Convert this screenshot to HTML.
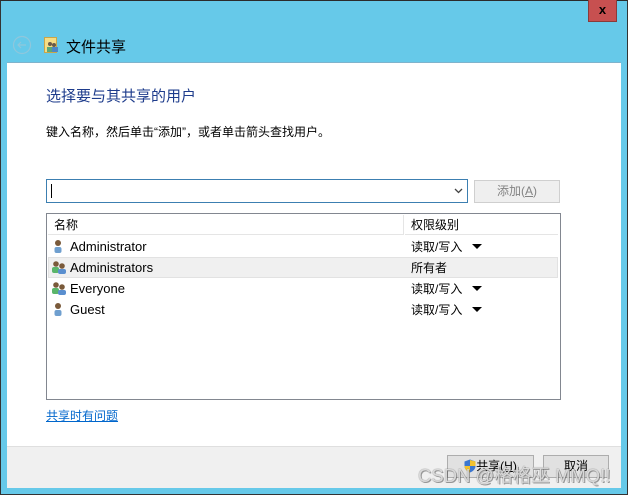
<!DOCTYPE html>
<html><head><meta charset="utf-8"><style>
*{margin:0;padding:0;box-sizing:border-box}
body{width:628px;height:495px;overflow:hidden;background:#66c9e9;font-family:"Liberation Sans","Microsoft YaHei","Noto Sans CJK SC",sans-serif;font-size:12px;color:#000;position:relative}
.frame{position:absolute;left:0;top:0;width:628px;height:495px;border:1px solid #333;border-top:1px solid #2b2b2b}
.abs{position:absolute}
.close{left:588px;top:0;width:29px;height:22px;background:#c75050;border:1px solid #8a3a3a;border-top:none;color:#000;font-weight:bold;font-size:13px;text-align:center;line-height:20px}
.content{left:7px;top:62px;width:614px;height:384px;background:#fff;border-top:1px solid #7fb3cc}
.footer{left:7px;top:446px;width:614px;height:42px;background:#f0f0f0;border-top:1px solid #dfdfdf}
.btn{height:23px;border:1px solid #adadad;background:#e1e1e1;text-align:center;line-height:21px;font-size:12px}
.row{position:absolute;left:1px;width:510px;height:21px;line-height:21px;font-size:12.5px}
.tri{display:inline-block;width:0;height:0;border-left:5px solid transparent;border-right:5px solid transparent;border-top:5px solid #000;margin-left:10px;vertical-align:2px}
.nm{font-size:13px}
</style></head><body>
<div class="frame"></div>
<div class="abs close">x</div>
<svg class="abs" style="left:12px;top:35px" width="20" height="20"><circle cx="10" cy="10" r="8.5" fill="none" stroke="#8fc7dc" stroke-width="1.2"/><path d="M14 10H6M9 7L6 10L9 13" fill="none" stroke="#8fc7dc" stroke-width="1.2"/></svg>
<svg class="abs" style="left:44px;top:37px" width="15" height="16"><rect x="0.5" y="0.5" width="12" height="15" fill="#f5dd85" stroke="#c9a64a"/><circle cx="6" cy="7" r="2" fill="#6a5a4a"/><circle cx="10" cy="8" r="2" fill="#6a5a4a"/><rect x="3" y="10" width="5" height="5" fill="#5aa87a"/><rect x="8" y="10" width="6" height="5" fill="#4c88c8"/></svg>
<div class="abs" style="left:66px;top:36px;font-size:15px;color:#000">文件共享</div>
<div class="abs content"></div>
<div class="abs" style="left:46px;top:85px;font-size:15px;color:#1e3c8c">选择要与其共享的用户</div>
<div class="abs" style="left:46px;top:123px;font-size:12px">键入名称，然后单击“添加”，或者单击箭头查找用户。</div>
<div class="abs" style="left:46px;top:179px;width:422px;height:24px;border:1px solid #3c7fb1"><div style="position:absolute;left:4px;top:4px;width:1px;height:14px;background:#000"></div><svg style="position:absolute;right:4px;top:8px" width="9" height="6"><path d="M1 1L4.5 4.5L8 1" fill="none" stroke="#444" stroke-width="1.3"/></svg></div>
<div class="abs btn" style="left:474px;top:180px;width:86px;color:#838383;background:#efefef;border-color:#cfcfcf">添加(<u>A</u>)</div>
<div class="abs" style="left:46px;top:213px;width:515px;height:187px;border:1px solid #828790">
<div style="position:absolute;left:1px;top:1px;width:356px;height:20px;border-right:1px solid #e5e5e5;border-bottom:1px solid #e5e5e5;line-height:20px;padding-left:6px">名称</div>
<div style="position:absolute;left:358px;top:1px;width:153px;height:20px;border-bottom:1px solid #e5e5e5;line-height:20px;padding-left:6px">权限级别</div>
<div class="row" style="top:43px;background:#f0f0f0;border:1px solid #e2e2e2"></div>
</div>
<svg width="0" height="0" style="position:absolute"><defs>
<g id="u"><circle cx="6" cy="4" r="3" fill="#7a5a3a"/><rect x="2.5" y="8" width="7" height="6" rx="2" fill="#6f9fcf"/></g>
<g id="g"><circle cx="5" cy="4" r="2.8" fill="#7a5a3a"/><rect x="1" y="7" width="7" height="6" rx="2" fill="#5ab56a"/><circle cx="11" cy="6" r="2.8" fill="#7a5a3a"/><rect x="7" y="9" width="8" height="5" rx="2" fill="#5a8fcf"/></g></defs></svg>
<svg class="abs" style="left:52px;top:239px" width="16" height="15"><use href="#u"/></svg>
<svg class="abs" style="left:51px;top:260px" width="16" height="15"><use href="#g"/></svg>
<svg class="abs" style="left:51px;top:281px" width="16" height="15"><use href="#g"/></svg>
<svg class="abs" style="left:52px;top:302px" width="16" height="15"><use href="#u"/></svg>
<div class="abs nm" style="left:70px;top:239px">Administrator</div>
<div class="abs nm" style="left:70px;top:260px">Administrators</div>
<div class="abs nm" style="left:70px;top:281px">Everyone</div>
<div class="abs nm" style="left:70px;top:302px">Guest</div>
<div class="abs" style="left:411px;top:238px">读取/写入<span class="tri"></span></div>
<div class="abs" style="left:411px;top:259px">所有者</div>
<div class="abs" style="left:411px;top:280px">读取/写入<span class="tri"></span></div>
<div class="abs" style="left:411px;top:301px">读取/写入<span class="tri"></span></div>
<div class="abs" style="left:46px;top:407px;color:#0066cc;text-decoration:underline">共享时有问题</div>
<div class="abs footer"></div>
<div class="abs btn" style="left:447px;top:455px;width:87px;">
<svg style="vertical-align:-3px" width="12" height="14"><path d="M6 0.5L11.5 2.5V7C11.5 10 9 12.5 6 13.5C3 12.5 0.5 10 0.5 7V2.5Z" fill="#3b77d0"/><path d="M6 1V7H11.5V2.5Z" fill="#f2c22e"/><path d="M0.5 7H6V13.5C3 12.5 0.5 10 0.5 7Z" fill="#f2c22e"/></svg>共享(<u>H</u>)</div>
<div class="abs btn" style="left:543px;top:455px;width:66px">取消</div>
<div class="abs" style="left:418px;top:462px;font-size:18.5px;color:rgba(255,255,255,0.75);text-shadow:0 0 1px #555,1px 1px 0 rgba(80,80,80,0.5)">CSDN @格格巫 MMQ!!</div>
</body></html>
